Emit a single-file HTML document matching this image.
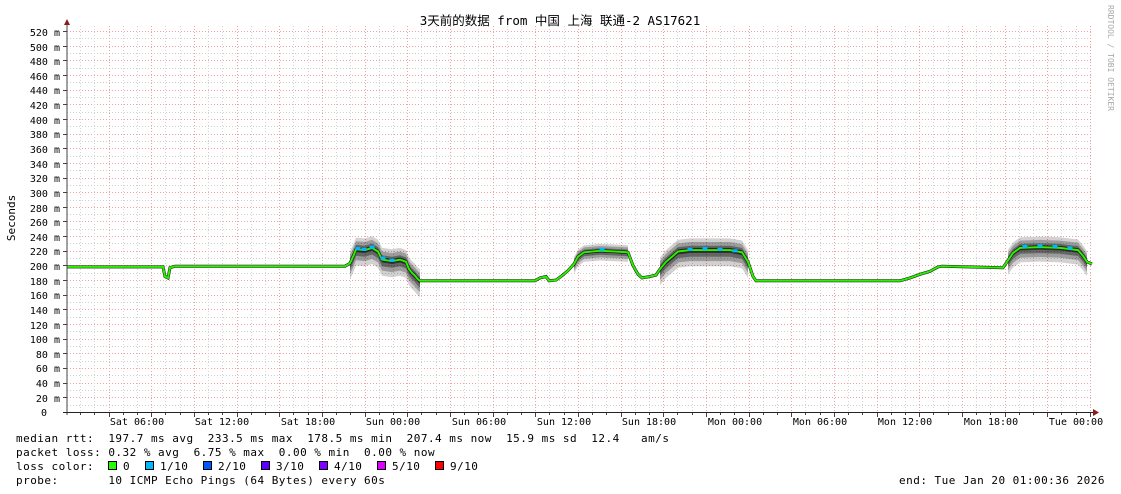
<!DOCTYPE html>
<html><head><meta charset="utf-8"><style>
html,body{margin:0;padding:0;background:#fff;width:1121px;height:494px;overflow:hidden}
svg text{font-family:"DejaVu Sans Mono","Liberation Mono","Noto Sans CJK SC",monospace;font-size:11px;fill:#000}
.ax text{font-size:10px}
.lg{letter-spacing:0.48px}
</style></head><body>
<svg id="s" width="1121" height="494" xmlns="http://www.w3.org/2000/svg">
<rect width="1121" height="494" fill="#fff"/>
<g id="grid"></g>
<g id="smoke"></g>
<g id="line"></g>
<line x1="67" y1="24" x2="67" y2="415" stroke="#444" stroke-width="1"/>
<line x1="63" y1="412.5" x2="1096" y2="412.5" stroke="#222" stroke-width="1"/>
<polygon points="64,25 70,25 67,19" fill="#8b1a1a"/>
<polygon points="1093,409 1093,416 1099,412.5" fill="#8b1a1a"/>
<text x="560" y="25" text-anchor="middle" style="font-family:'DejaVu Sans Mono','Noto Sans CJK SC',monospace;font-size:12.5px">3天前的数据 from 中国 上海 联通-2 AS17621</text>
<text transform="translate(15,218) rotate(-90)" text-anchor="middle">Seconds</text>
<text transform="translate(1108,5) rotate(90)" style="font-size:8px;fill:#aaa">RRDTOOL / TOBI OETIKER</text>
<g class="ax" text-anchor="end">
<text x="60" y="36">520 m</text><text x="60" y="51">500 m</text><text x="60" y="65">480 m</text><text x="60" y="80">460 m</text><text x="60" y="94">440 m</text><text x="60" y="109">420 m</text><text x="60" y="124">400 m</text><text x="60" y="138">380 m</text><text x="60" y="153">360 m</text><text x="60" y="168">340 m</text><text x="60" y="182">320 m</text><text x="60" y="197">300 m</text><text x="60" y="212">280 m</text><text x="60" y="226">260 m</text><text x="60" y="241">240 m</text><text x="60" y="255">220 m</text><text x="60" y="270">200 m</text><text x="60" y="285">180 m</text><text x="60" y="299">160 m</text><text x="60" y="314">140 m</text><text x="60" y="329">120 m</text><text x="60" y="343">100 m</text><text x="60" y="358">80 m</text><text x="60" y="372">60 m</text><text x="60" y="387">40 m</text><text x="60" y="402">20 m</text><text x="47" y="416">0</text>
</g>
<g class="ax" text-anchor="middle">
<text x="137" y="425">Sat 06:00</text><text x="222" y="425">Sat 12:00</text><text x="308" y="425">Sat 18:00</text><text x="393" y="425">Sun 00:00</text><text x="479" y="425">Sun 06:00</text><text x="564" y="425">Sun 12:00</text><text x="649" y="425">Sun 18:00</text><text x="735" y="425">Mon 00:00</text><text x="820" y="425">Mon 06:00</text><text x="905" y="425">Mon 12:00</text><text x="991" y="425">Mon 18:00</text><text x="1076" y="425">Tue 00:00</text>
</g>
<g class="lg">
<text x="16" y="442" xml:space="preserve">median rtt:  197.7 ms avg  233.5 ms max  178.5 ms min  207.4 ms now  15.9 ms sd  12.4   am/s</text>
<text x="16" y="456" xml:space="preserve">packet loss: 0.32 % avg  6.75 % max  0.00 % min  0.00 % now</text>
<text x="16" y="470" xml:space="preserve">loss color:  </text>
<text x="16" y="484" xml:space="preserve">probe:       10 ICMP Echo Pings (64 Bytes) every 60s</text>
<text x="1105" y="484" text-anchor="end" xml:space="preserve">end: Tue Jan 20 01:00:36 2026</text>
<text x="123" y="470">0</text><text x="160" y="470">1/10</text><text x="218" y="470">2/10</text><text x="276" y="470">3/10</text><text x="334" y="470">4/10</text><text x="392" y="470">5/10</text><text x="450" y="470">9/10</text>
</g>
<g stroke="#000" stroke-width="1">
<rect x="108.5" y="461.5" width="8" height="8" fill="#26ff00"/>
<rect x="145.5" y="461.5" width="8" height="8" fill="#00b8ff"/>
<rect x="203.5" y="461.5" width="8" height="8" fill="#0059ff"/>
<rect x="261.5" y="461.5" width="8" height="8" fill="#5e00ff"/>
<rect x="319.5" y="461.5" width="8" height="8" fill="#7e00ff"/>
<rect x="377.5" y="461.5" width="8" height="8" fill="#dd00ff"/>
<rect x="435.5" y="461.5" width="8" height="8" fill="#ff0000"/>
</g>
</svg>
<script>
var NS="http://www.w3.org/2000/svg";
function el(p,t,a){var e=document.createElementNS(NS,t);for(var k in a)e.setAttribute(k,a[k]);p.appendChild(e);return e;}
var g=document.getElementById("grid");
function Y(v){return 412-v*0.7327;}
for(var v=10;v<=520;v+=10){var y=Math.round(Y(v))+0.5;var maj=v%20==0;
 el(g,"line",{x1:67,x2:1092,y1:y,y2:y,stroke:maj?"#f0a0a0":"#cfcfcf","stroke-dasharray":"1,2","stroke-width":1});
 if(maj)el(g,"line",{x1:63,x2:67,y1:y,y2:y,stroke:"#444"});}
var ph=14.222, x0=137-5*ph;
for(var i=0;i<80;i++){var x=x0+i*ph;if(x<68||x>1092)continue;var xr=Math.round(x)+0.5;var maj=(i%3==0);
 el(g,"line",{x1:xr,x2:xr,y1:26,y2:412,stroke:maj?"#f0a0a0":"#d4d4d4","stroke-dasharray":"1,2"});
 el(g,"line",{x1:xr,x2:xr,y1:412,y2:maj?417:415,stroke:"#444"});}
var pts=[[67,198],[163,198],[165,185],[168,183],[170,197],[175,199],[345,199],[350,203],[354,215],[356,222],[365,221],[372,224],[378,219],[382,208],[392,206],[400,208],[406,205],[409,195],[412,190],[415,186],[418,181],[420,179],[535,179],[540,183],[546,185],[549,179],[556,180],[562,186],[568,193],[574,202],[578,212],[584,218],[600,220],[615,219],[628,218],[633,200],[638,188],[642,183],[650,185],[656,187],[660,195],[666,205],[672,212],[678,219],[690,221],[710,221],[730,221],[742,218],[748,205],[753,185],[756,179],[900,179],[910,183],[920,188],[930,192],[938,198],[942,199],[1003,197],[1008,207],[1013,217],[1020,224],[1040,225],[1060,224],[1078,221],[1083,213],[1087,205],[1092,202]];
var sm=document.getElementById("smoke");
// smoke regions: [x0,x1,up,down]
var regs=[[350,420,1],[570,632,0.6],[658,752,1],[1008,1090,0.9]];
var levels=[[16,22,0.18],[11,15,0.25],[6,9,0.35],[3,4,0.5]];
regs.forEach(function(r){
 var sel=pts.filter(function(p){return p[0]>=r[0]&&p[0]<=r[1];});
 levels.forEach(function(l){
  var up=sel.map(function(p){return p[0]+","+Y(p[1]+l[0]*r[2]).toFixed(1)});
  var dn=sel.slice().reverse().map(function(p){return p[0]+","+Y(p[1]-l[1]*r[2]).toFixed(1)});
  el(sm,"polygon",{points:up.concat(dn).join(" "),fill:"#000","fill-opacity":l[2]});
 });
});
var d="M"+pts.map(function(p){return p[0]+","+Y(p[1]).toFixed(1)}).join(" L");
var L=document.getElementById("line");
el(L,"path",{d:d,fill:"none",stroke:"#111","stroke-width":3,"stroke-linejoin":"miter"});
el(L,"path",{d:d,fill:"none",stroke:"#2bf000","stroke-width":2});
[[358,223],[364,222],[372,225],[383,210],[392,207],[602,222],[690,222],[705,223],[720,222],[735,220],[1025,226],[1040,227],[1055,226],[1070,224]].forEach(function(p){el(L,"rect",{x:p[0]-2.5,y:Y(p[1])-1.5,width:5,height:3,fill:"#00b8ff"});});
</script>
</body></html>
